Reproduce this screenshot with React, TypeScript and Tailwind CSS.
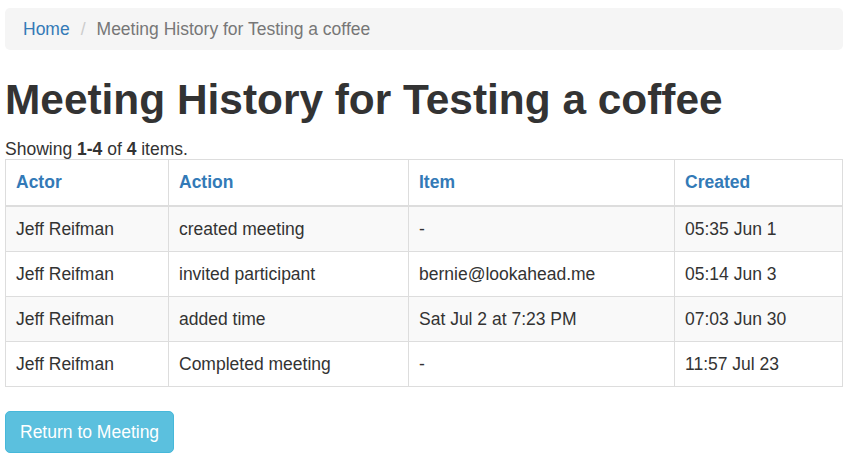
import React from 'react';

const rows = [
  { actor: 'Jeff Reifman', action: 'created meeting', item: '-', created: '05:35 Jun 1' },
  { actor: 'Jeff Reifman', action: 'invited participant', item: 'bernie@lookahead.me', created: '05:14 Jun 3' },
  { actor: 'Jeff Reifman', action: 'added time', item: 'Sat Jul 2 at 7:23 PM', created: '07:03 Jun 30' },
  { actor: 'Jeff Reifman', action: 'Completed meeting', item: '-', created: '11:57 Jul 23' },
];

const App: React.FC = () => {
  return (
    <div className="min-h-screen bg-white pl-[5px] pr-[7px] pt-[8px] text-[17.5px] text-[#333] font-['Liberation_Sans',Arial,sans-serif]">
      <ol className="flex items-center h-[42px] px-[18px] bg-[#f5f5f5] rounded-[5px]">
        <li>
          <a className="text-[#337ab7]" href="#">Home</a>
        </li>
        <li className="text-[#777]">
          <span className="px-[11px] text-[#ccc]">/</span>
          Meeting History for Testing a coffee
        </li>
      </ol>

      <h1 className="mt-[24px] text-[42.4px] leading-[52px] font-semibold text-[#333]">
        Meeting History for Testing a coffee
      </h1>

      <div className="mt-[13px] leading-[20px]">
        Showing <b>1-4</b> of <b>4</b> items.
      </div>

      <table className="table-fixed border-collapse w-full border border-[#ddd]">
        <colgroup>
          <col className="w-[163px]" />
          <col className="w-[240px]" />
          <col className="w-[266px]" />
          <col />
        </colgroup>
        <thead>
          <tr className="h-[46px]">
            {['Actor', 'Action', 'Item', 'Created'].map((h) => (
              <th
                key={h}
                className="text-left font-bold text-[#337ab7] px-[10px] border border-[#ddd] border-b-[2px]"
              >
                {h}
              </th>
            ))}
          </tr>
        </thead>
        <tbody>
          {rows.map((r, i) => (
            <tr key={i} className={`${i === 0 ? 'h-[46px]' : 'h-[45px]'} ${i % 2 === 0 ? 'bg-[#f9f9f9]' : 'bg-white'}`}>
              <td className="px-[10px] border border-[#ddd]">{r.actor}</td>
              <td className="px-[10px] border border-[#ddd]">{r.action}</td>
              <td className="px-[10px] border border-[#ddd]">{r.item}</td>
              <td className="px-[10px] border border-[#ddd]">{r.created}</td>
            </tr>
          ))}
        </tbody>
      </table>

      <button className="mt-[24px] h-[42px] px-[14px] rounded-[5px] bg-[#5bc0de] border border-[#46b8da] text-white text-[17.5px]">
        Return to Meeting
      </button>
    </div>
  );
};

export default App;
